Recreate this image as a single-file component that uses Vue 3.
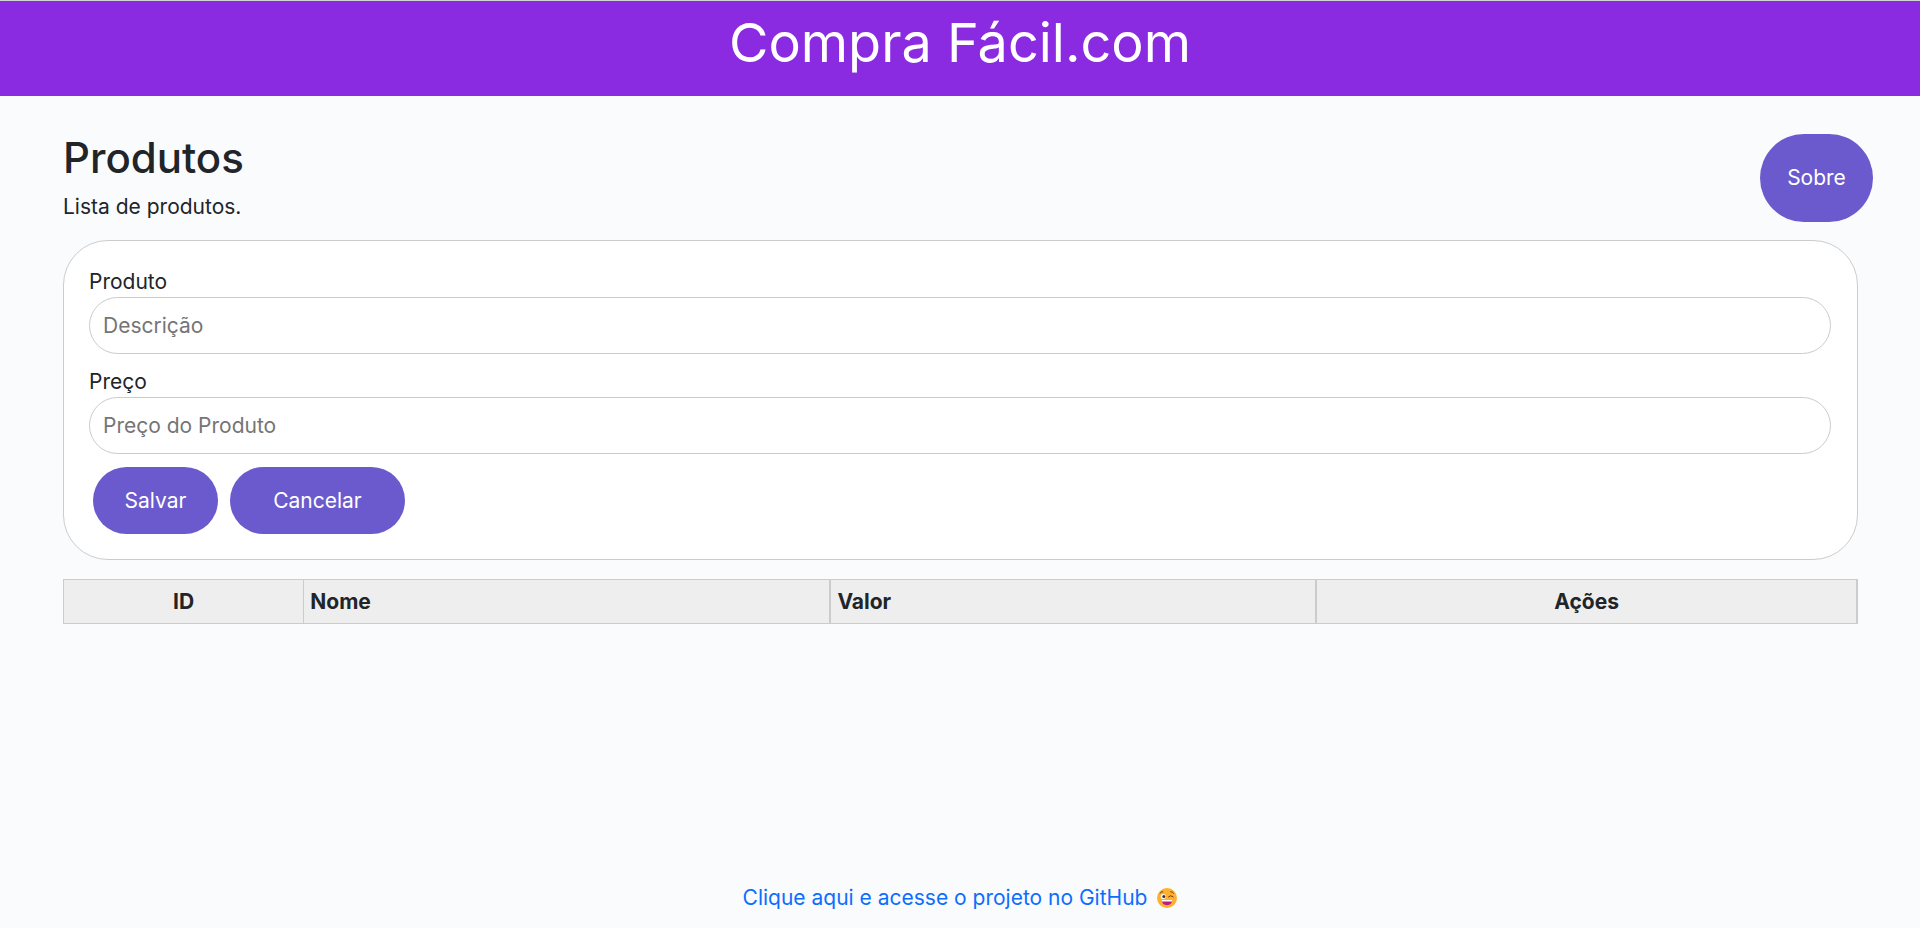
<script setup>
import { ref } from 'vue'

const produto = ref('')
const preco = ref('')

function limpar() {
  produto.value = ''
  preco.value = ''
}
</script>

<template>
  <div class="page">
    <header class="topbar">Compra Fácil.com</header>

    <main class="content">
      <div class="intro">
        <div>
          <h1>Produtos</h1>
          <p>Lista de produtos.</p>
        </div>
        <button type="button" class="btn about">Sobre</button>
      </div>

      <form class="card" @submit.prevent>
        <div class="field">
          <label for="produto">Produto</label>
          <input id="produto" v-model="produto" type="text" placeholder="Descrição" />
        </div>
        <div class="field">
          <label for="preco">Preço</label>
          <input id="preco" v-model="preco" type="text" placeholder="Preço do Produto" />
        </div>
        <div class="actions">
          <button type="submit" class="btn save">Salvar</button>
          <button type="button" class="btn cancel" @click="limpar">Cancelar</button>
        </div>
      </form>

      <table class="list">
        <thead>
          <tr>
            <th class="id">ID</th>
            <th class="name">Nome</th>
            <th class="price">Valor</th>
            <th class="tools">Ações</th>
          </tr>
        </thead>
      </table>
    </main>

    <footer class="footer">
      <a href="#">
        <span>Clique aqui e acesse o projeto no GitHub</span>
        <svg class="emoji" viewBox="0 0 20 20" aria-hidden="true">
          <circle cx="10" cy="10" r="10" fill="#ffb02e" />
          <circle cx="6.200" cy="8.600" r="2.500" fill="#fff" />
          <circle cx="6.800" cy="8.600" r="1.500" fill="#402a32" />
          <path d="M3 5.200Q4 3.600 5.800 3.700M13.800 3.700Q15.500 3.700 16.600 5.200M11.500 8.800Q13.500 6.500 16.200 8.800" fill="none" stroke="#6b3f22" stroke-width="1" stroke-linecap="round" />
          <path d="M4.800 12H15.300Q14.800 17.200 10 17.200T4.800 12Z" fill="#bb1d80" />
          <path d="M4.800 12H15.300L15 13.400H5.100Z" fill="#fff" />
        </svg>
      </a>
    </footer>
  </div>
</template>

<style>
body {
  margin: 0;
  background: #fafbfd;
}
</style>

<style scoped>
.page {
  box-sizing: border-box;
  min-height: 100vh;
  display: flex;
  flex-direction: column;
  color: #212529;
  font-family: Inter, "Open Sans", sans-serif;
  font-size: 21px;
  line-height: 30px;
}

.page * {
  box-sizing: border-box;
}

.topbar {
  height: 96px;
  padding-top: 4px;
  border-top: 1px solid #d3d3d3;
  background: #8a2be2;
  color: #fff;
  font-size: 54px;
  line-height: 76px;
  text-align: center;
}

.content {
  flex: 1;
  padding: 38px 62px 0 63px;
}

.intro {
  display: flex;
  justify-content: space-between;
  margin: 0 -15px 18px 0;
}

h1 {
  margin: 0 0 10px;
  font-size: 42px;
  font-weight: 500;
  line-height: 48px;
}

p {
  margin: 0;
}

.btn {
  border: 0;
  background: #6a5acd;
  color: #fff;
  font: inherit;
  cursor: pointer;
}

.about {
  width: 113px;
  height: 88px;
  border-radius: 44px;
}

.card {
  display: flex;
  flex-direction: column;
  gap: 13px;
  padding: 26px 26px 25px 25px;
  border: 1px solid #ccc;
  border-radius: 45px;
  background: #fff;
}

.field {
  display: flex;
  flex-direction: column;
}

.field input {
  width: 100%;
  height: 57px;
  padding: 0 13px;
  border: 1px solid #ccc;
  border-radius: 29px;
  background: #fff;
  color: inherit;
  font: inherit;
}

.field input::placeholder {
  color: #757575;
  opacity: 1;
}

.actions {
  display: flex;
  gap: 12px;
  padding-left: 4px;
}

.actions .btn {
  height: 67px;
  border-radius: 34px;
}

.save {
  width: 125px;
}

.cancel {
  width: 175px;
}

.list {
  width: 100%;
  margin-top: 19px;
  border: 1px solid #ccc;
  border-collapse: separate;
  border-spacing: 0;
  table-layout: fixed;
  background: #eee;
}

.list th {
  height: 43px;
  padding: 0 6px;
  border-right: 2px solid #ccc;
  font-weight: 700;
  text-align: left;
}

.list .id {
  width: 13.4%;
  border-right-width: 1px;
  text-align: center;
}

.list .name {
  width: 29.4%;
}

.list .price {
  width: 27.1%;
}

.list .tools {
  border-right-width: 1px;
  text-align: center;
}

.footer {
  padding-bottom: 15px;
  text-align: center;
}

.footer a {
  display: inline-flex;
  align-items: center;
  gap: 10px;
  color: #0d6efd;
  text-decoration: none;
}

.emoji {
  width: 20px;
  height: 20px;
}
</style>
